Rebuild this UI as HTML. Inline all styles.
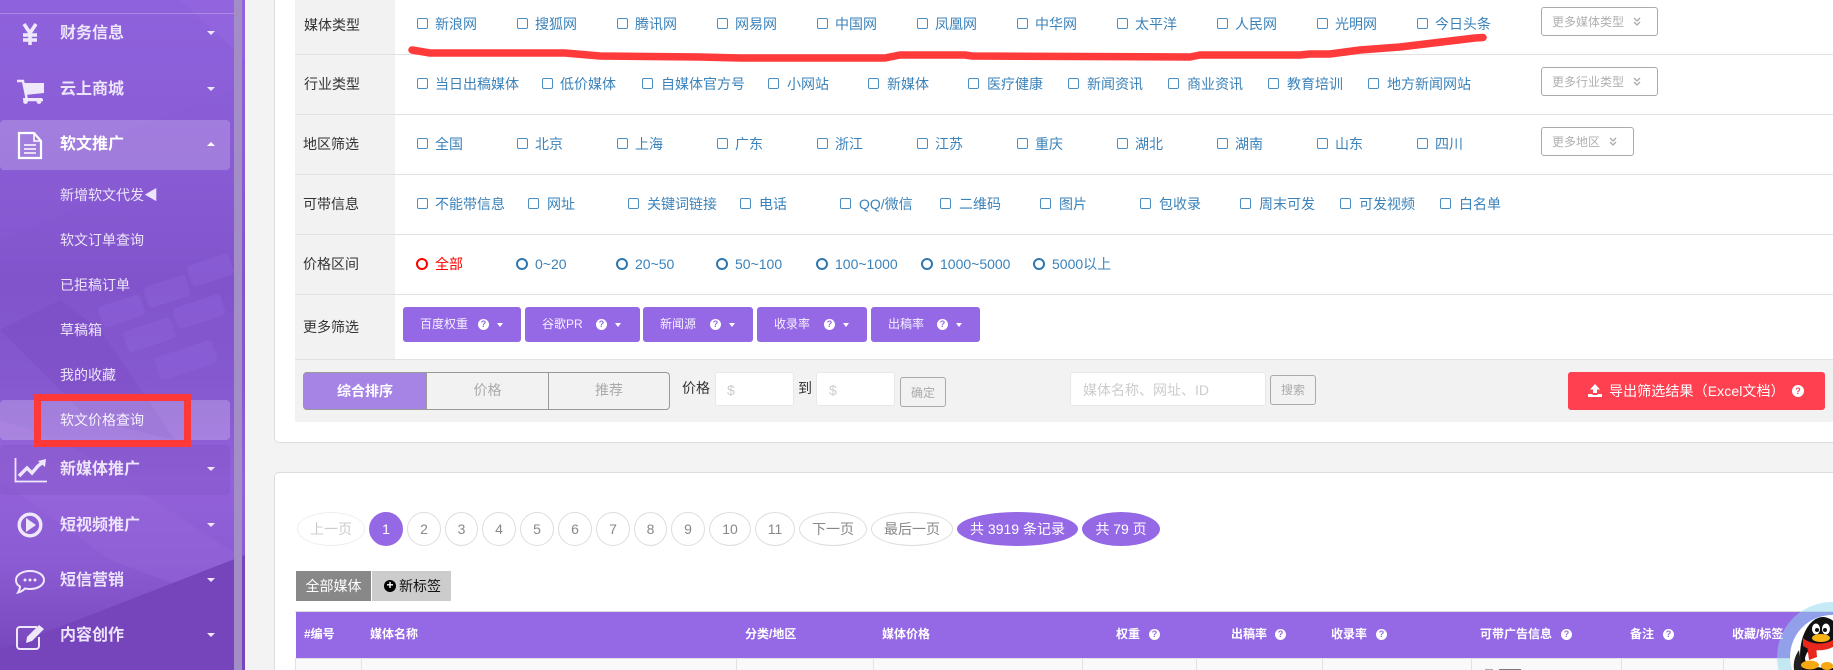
<!DOCTYPE html>
<html lang="zh-CN">
<head>
<meta charset="utf-8">
<title>软文价格查询</title>
<style>
html,body{margin:0;padding:0;width:1833px;height:670px;overflow:hidden}
body{position:relative;background:#f3f3f3;font-family:"Liberation Sans","Noto Sans CJK SC",sans-serif;font-size:14px;color:#333}
div,span,a,svg{position:absolute;box-sizing:border-box}
#w{left:0;top:0;width:1833px;height:670px;overflow:hidden;background:#f3f3f3}
.t{white-space:nowrap;line-height:20px;height:20px}
.c{width:11px;height:11px;border:1px solid #4a8fc4;border-radius:2px}
.r{width:12px;height:12px;border:2px solid #2f77b0;border-radius:50%}
.l{color:#3a82ba;white-space:nowrap;line-height:20px;height:20px}
.h{left:295px;width:1538px;height:1px;background:#e2e2e2}
.m{left:60px;color:#ece4fa;font-weight:700;font-size:16px;line-height:24px;height:24px;white-space:nowrap}
.s{left:60px;color:#ece4fa;font-size:14px;line-height:20px;height:20px;white-space:nowrap}
.ca{left:207px;width:0;height:0;border-left:4px solid transparent;border-right:4px solid transparent;border-top:4px solid #efe8fb}
.b{top:307px;height:35px;background:#9568e5;border-radius:3px}
.b .x{color:#f6f1ff;font-size:12px;line-height:20px;top:7px;white-space:nowrap}
.q{width:11px;height:11px;border-radius:50%;background:#fff;color:#9568e5;font-size:9px;font-weight:700;line-height:11px;text-align:center}
.dc{width:0;height:0;border-left:3.5px solid transparent;border-right:3.5px solid transparent;border-top:4px solid #fff}
.mo{height:29px;border:1px solid #aaa;border-radius:3px;background:#fff;left:1541px}
.mo .x{left:10px;top:4px;color:#b0b0b0;font-size:12px;line-height:20px;white-space:nowrap}
.p{top:512px;height:34px;border:1px solid #ddd;border-radius:50%;background:#fff;color:#888;text-align:center;line-height:32px;font-size:14px;white-space:nowrap}
.th{top:624px;color:#fff;font-weight:700;font-size:12px;line-height:20px;height:20px;white-space:nowrap}
.vl{top:659px;width:1px;height:11px;background:#e2e2e2}
.inp{background:#fff;border:1px solid #e8e8e8;border-radius:3px;height:34px;top:372px}
</style>
</head>
<body>
<div id="w">

<!-- sidebar -->
<svg style="left:0;top:0" width="245" height="670" viewBox="0 0 245 670">
  <defs>
    <linearGradient id="g" x1="0" y1="0" x2="0" y2="1">
      <stop offset="0" stop-color="#8e62dc"/>
      <stop offset=".22" stop-color="#8a5dd6"/>
      <stop offset=".42" stop-color="#8154cc"/>
      <stop offset=".56" stop-color="#8558cf"/>
      <stop offset=".72" stop-color="#9362da"/>
      <stop offset=".84" stop-color="#8a5bd2"/>
      <stop offset="1" stop-color="#7544b9"/>
    </linearGradient>
  </defs>
  <rect width="245" height="670" fill="url(#g)"/>
  <polygon points="180,0 245,0 245,60" fill="#9468e0" opacity=".6"/>
  <polygon points="0,180 245,85 245,140 0,240" fill="#8a5dd4" opacity=".4"/>
  <g fill="#9064dc" opacity=".4">
    <rect x="100" y="300" width="44" height="22" rx="4" transform="rotate(-18 122 312)"/>
    <rect x="145" y="282" width="44" height="22" rx="4" transform="rotate(-18 162 292)"/>
    <rect x="190" y="262" width="44" height="22" rx="4" transform="rotate(-18 202 277)"/>
    <rect x="125" y="325" width="50" height="22" rx="4" transform="rotate(-18 146 337)"/>
    <rect x="175" y="305" width="50" height="22" rx="4" transform="rotate(-18 186 317)"/>
    <rect x="155" y="350" width="60" height="24" rx="4" transform="rotate(-18 180 358)"/>
  </g>
  <polygon points="60,300 100,330 175,440 90,420 0,330" fill="#7a4bc2" opacity=".4"/>
  <polygon points="0,420 70,445 245,560 245,610 110,560 0,480" fill="#9a6ade" opacity=".35"/>
  <polygon points="0,650 245,555 245,670 0,670" fill="#7645bb"/>
  <rect y="13" width="234" height="1" fill="#fff" opacity=".25"/>
  <rect x="234" width="8" height="670" fill="#a38dc6"/>
</svg>
<div style="left:0;top:120px;width:230px;height:50px;background:rgba(255,255,255,.2);border-radius:4px"></div>
<div style="left:0;top:400px;width:230px;height:40px;background:rgba(255,255,255,.22);border-radius:4px"></div>
<div style="left:0;top:445px;width:230px;height:50px;background:rgba(90,50,160,.12);border-radius:4px"></div>

<svg style="left:0;top:0" width="60" height="670" viewBox="0 0 60 670" fill="none">
  <path d="M24 24l6 9 6-9M23 35h14M23 40h14M30 33v12" stroke="#efe8fb" stroke-width="3.6"/>
  <path d="M17 81h6l4 19h16" stroke="#efe8fb" stroke-width="2.4"/>
  <path d="M23 83h21v10l-19 2z" fill="#efe8fb"/>
  <rect x="23" y="98" width="19" height="2" fill="#efe8fb"/>
  <circle cx="25.500" cy="101.500" r="2.400" fill="#efe8fb"/><circle cx="39" cy="101.500" r="2.400" fill="#efe8fb"/>
  <path d="M19 133h15l7 8v17H19z" stroke="#fff" stroke-width="2.200"/>
  <path d="M34 133v8h7" stroke="#fff" stroke-width="1.600"/>
  <path d="M24 145h12M24 149h12M24 153h12" stroke="#fff" stroke-width="1.600"/>
  <path d="M15.500 458v23.500H47" stroke="#efe8fb" stroke-width="1.800"/>
  <path d="M19 476l8-8 5 5 6-7 5-4" stroke="#efe8fb" stroke-width="3.400"/>
  <path d="M38 461l8-2-1 8z" fill="#efe8fb"/>
  <circle cx="30" cy="525" r="10.800" stroke="#efe8fb" stroke-width="3.400"/>
  <path d="M26 518l10 7-10 7z" fill="#efe8fb"/>
  <path d="M30 571c8 0 14 4 14 9s-6 9-14 9c-2 0-3 0-5-.500-2 2-4 3.500-7 4 1-1.500 2-3.500 2-6-3-1.500-4-4-4-6.500 0-5 6-9 14-9z" stroke="#efe8fb" stroke-width="2"/>
  <circle cx="25" cy="580" r="1.500" fill="#efe8fb"/><circle cx="30" cy="580" r="1.500" fill="#efe8fb"/><circle cx="35" cy="580" r="1.500" fill="#efe8fb"/>
  <path d="M37 627H20a3 3 0 0 0-3 3v16a3 3 0 0 0 3 3h16a3 3 0 0 0 3-3v-9" stroke="#efe8fb" stroke-width="2"/>
  <path d="M26 643l1-6 12-12 5 4-12 12z" fill="#efe8fb"/>
</svg>

<div class="m" style="top:22px">财务信息</div><div class="ca" style="top:31px"></div>
<div class="m" style="top:78px">云上商城</div><div class="ca" style="top:87px"></div>
<div class="m" style="top:133px;color:#fff">软文推广</div><div class="ca" style="top:142px;border-top:0;border-bottom:4px solid #fff"></div>
<div class="s" style="top:185px">新增软文代发◀</div>
<div class="s" style="top:230px">软文订单查询</div>
<div class="s" style="top:275px">已拒稿订单</div>
<div class="s" style="top:320px">草稿箱</div>
<div class="s" style="top:365px">我的收藏</div>
<div class="s" style="top:410px;color:#f6f1ff">软文价格查询</div>
<div class="m" style="top:458px">新媒体推广</div><div class="ca" style="top:467px"></div>
<div class="m" style="top:514px">短视频推广</div><div class="ca" style="top:523px"></div>
<div class="m" style="top:569px">短信营销</div><div class="ca" style="top:578px"></div>
<div class="m" style="top:624px">内容创作</div><div class="ca" style="top:633px"></div>
<div style="left:34px;top:394px;width:157px;height:53px;border:7px solid #ff3838"></div>

<!-- top card -->
<div style="left:274px;top:0;width:1559px;height:443px;background:#fff;border:1px solid #ddd;border-top:0;border-right:0;border-radius:0 0 0 5px"></div>
<div style="left:295px;top:0;width:100px;height:359px;background:#f2f2f2"></div>
<div class="h" style="top:54px"></div>
<div class="h" style="top:114px"></div>
<div class="h" style="top:174px"></div>
<div class="h" style="top:234px"></div>
<div class="h" style="top:294px"></div>
<div class="h" style="top:359px"></div>

<div class="t" style="left:304px;top:15px">媒体类型</div>
<div class="t" style="left:304px;top:74px">行业类型</div>
<div class="t" style="left:303px;top:134px">地区筛选</div>
<div class="t" style="left:303px;top:194px">可带信息</div>
<div class="t" style="left:303px;top:254px">价格区间</div>
<div class="t" style="left:303px;top:317px">更多筛选</div>

<!-- row 1 -->
<div class="c" style="left:417px;top:18px"></div><div class="l" style="left:435px;top:14px">新浪网</div>
<div class="c" style="left:517px;top:18px"></div><div class="l" style="left:535px;top:14px">搜狐网</div>
<div class="c" style="left:617px;top:18px"></div><div class="l" style="left:635px;top:14px">腾讯网</div>
<div class="c" style="left:717px;top:18px"></div><div class="l" style="left:735px;top:14px">网易网</div>
<div class="c" style="left:817px;top:18px"></div><div class="l" style="left:835px;top:14px">中国网</div>
<div class="c" style="left:917px;top:18px"></div><div class="l" style="left:935px;top:14px">凤凰网</div>
<div class="c" style="left:1017px;top:18px"></div><div class="l" style="left:1035px;top:14px">中华网</div>
<div class="c" style="left:1117px;top:18px"></div><div class="l" style="left:1135px;top:14px">太平洋</div>
<div class="c" style="left:1217px;top:18px"></div><div class="l" style="left:1235px;top:14px">人民网</div>
<div class="c" style="left:1317px;top:18px"></div><div class="l" style="left:1335px;top:14px">光明网</div>
<div class="c" style="left:1417px;top:18px"></div><div class="l" style="left:1435px;top:14px">今日头条</div>
<div class="mo" style="top:7px;width:117px"><span class="x">更多媒体类型</span><svg style="left:91px;top:9px" width="8" height="9" viewBox="0 0 8 9" fill="none" stroke="#aaa" stroke-width="1.300"><path d="M1 1l3 3 3-3M1 5l3 3 3-3"/></svg></div>

<!-- row 2 -->
<div class="c" style="left:417px;top:78px"></div><div class="l" style="left:435px;top:74px">当日出稿媒体</div>
<div class="c" style="left:542px;top:78px"></div><div class="l" style="left:560px;top:74px">低价媒体</div>
<div class="c" style="left:642px;top:78px"></div><div class="l" style="left:661px;top:74px">自媒体官方号</div>
<div class="c" style="left:768px;top:78px"></div><div class="l" style="left:787px;top:74px">小网站</div>
<div class="c" style="left:868px;top:78px"></div><div class="l" style="left:887px;top:74px">新媒体</div>
<div class="c" style="left:968px;top:78px"></div><div class="l" style="left:987px;top:74px">医疗健康</div>
<div class="c" style="left:1068px;top:78px"></div><div class="l" style="left:1087px;top:74px">新闻资讯</div>
<div class="c" style="left:1168px;top:78px"></div><div class="l" style="left:1187px;top:74px">商业资讯</div>
<div class="c" style="left:1268px;top:78px"></div><div class="l" style="left:1287px;top:74px">教育培训</div>
<div class="c" style="left:1368px;top:78px"></div><div class="l" style="left:1387px;top:74px">地方新闻网站</div>
<div class="mo" style="top:67px;width:117px"><span class="x">更多行业类型</span><svg style="left:91px;top:9px" width="8" height="9" viewBox="0 0 8 9" fill="none" stroke="#aaa" stroke-width="1.300"><path d="M1 1l3 3 3-3M1 5l3 3 3-3"/></svg></div>

<!-- row 3 -->
<div class="c" style="left:417px;top:138px"></div><div class="l" style="left:435px;top:134px">全国</div>
<div class="c" style="left:517px;top:138px"></div><div class="l" style="left:535px;top:134px">北京</div>
<div class="c" style="left:617px;top:138px"></div><div class="l" style="left:635px;top:134px">上海</div>
<div class="c" style="left:717px;top:138px"></div><div class="l" style="left:735px;top:134px">广东</div>
<div class="c" style="left:817px;top:138px"></div><div class="l" style="left:835px;top:134px">浙江</div>
<div class="c" style="left:917px;top:138px"></div><div class="l" style="left:935px;top:134px">江苏</div>
<div class="c" style="left:1017px;top:138px"></div><div class="l" style="left:1035px;top:134px">重庆</div>
<div class="c" style="left:1117px;top:138px"></div><div class="l" style="left:1135px;top:134px">湖北</div>
<div class="c" style="left:1217px;top:138px"></div><div class="l" style="left:1235px;top:134px">湖南</div>
<div class="c" style="left:1317px;top:138px"></div><div class="l" style="left:1335px;top:134px">山东</div>
<div class="c" style="left:1417px;top:138px"></div><div class="l" style="left:1435px;top:134px">四川</div>
<div class="mo" style="top:127px;width:93px"><span class="x">更多地区</span><svg style="left:67px;top:9px" width="8" height="9" viewBox="0 0 8 9" fill="none" stroke="#aaa" stroke-width="1.300"><path d="M1 1l3 3 3-3M1 5l3 3 3-3"/></svg></div>

<!-- row 4 -->
<div class="c" style="left:417px;top:198px"></div><div class="l" style="left:435px;top:194px">不能带信息</div>
<div class="c" style="left:528px;top:198px"></div><div class="l" style="left:547px;top:194px">网址</div>
<div class="c" style="left:628px;top:198px"></div><div class="l" style="left:647px;top:194px">关键词链接</div>
<div class="c" style="left:740px;top:198px"></div><div class="l" style="left:759px;top:194px">电话</div>
<div class="c" style="left:840px;top:198px"></div><div class="l" style="left:859px;top:194px">QQ/微信</div>
<div class="c" style="left:940px;top:198px"></div><div class="l" style="left:959px;top:194px">二维码</div>
<div class="c" style="left:1040px;top:198px"></div><div class="l" style="left:1059px;top:194px">图片</div>
<div class="c" style="left:1140px;top:198px"></div><div class="l" style="left:1159px;top:194px">包收录</div>
<div class="c" style="left:1240px;top:198px"></div><div class="l" style="left:1259px;top:194px">周末可发</div>
<div class="c" style="left:1340px;top:198px"></div><div class="l" style="left:1359px;top:194px">可发视频</div>
<div class="c" style="left:1440px;top:198px"></div><div class="l" style="left:1459px;top:194px">白名单</div>

<!-- row 5 -->
<div class="r" style="left:416px;top:258px;border-color:#f00"></div><div class="l" style="left:435px;top:254px;color:#f00">全部</div>
<div class="r" style="left:516px;top:258px"></div><div class="l" style="left:535px;top:254px">0~20</div>
<div class="r" style="left:616px;top:258px"></div><div class="l" style="left:635px;top:254px">20~50</div>
<div class="r" style="left:716px;top:258px"></div><div class="l" style="left:735px;top:254px">50~100</div>
<div class="r" style="left:816px;top:258px"></div><div class="l" style="left:835px;top:254px">100~1000</div>
<div class="r" style="left:921px;top:258px"></div><div class="l" style="left:940px;top:254px">1000~5000</div>
<div class="r" style="left:1033px;top:258px"></div><div class="l" style="left:1052px;top:254px">5000以上</div>

<!-- dropdown buttons -->
<div class="b" style="left:403px;width:118px"><span class="x" style="left:17px">百度权重</span><span class="q" style="left:75px;top:12px">?</span><span class="dc" style="left:94px;top:16px"></span></div>
<div class="b" style="left:525px;width:115px"><span class="x" style="left:17px">谷歌PR</span><span class="q" style="left:71px;top:12px">?</span><span class="dc" style="left:90px;top:16px"></span></div>
<div class="b" style="left:643px;width:110px"><span class="x" style="left:17px">新闻源</span><span class="q" style="left:67px;top:12px">?</span><span class="dc" style="left:86px;top:16px"></span></div>
<div class="b" style="left:757px;width:110px"><span class="x" style="left:17px">收录率</span><span class="q" style="left:67px;top:12px">?</span><span class="dc" style="left:86px;top:16px"></span></div>
<div class="b" style="left:871px;width:109px"><span class="x" style="left:17px">出稿率</span><span class="q" style="left:66px;top:12px">?</span><span class="dc" style="left:85px;top:16px"></span></div>

<!-- gray toolbar -->
<div style="left:295px;top:360px;width:1538px;height:62px;background:#f2f2f2"></div>
<div style="left:303px;top:372px;width:367px;height:38px;border:1px solid #999;border-radius:4px;background:#f2f2f2"></div>
<div style="left:303px;top:372px;width:124px;height:38px;background:#a684e6;border:1px solid #999;border-radius:4px 0 0 4px;color:#fff;text-align:center;line-height:36px;font-weight:700">综合排序</div>
<div style="left:426px;top:372px;width:123px;height:38px;border-right:1px solid #999;border-left:1px solid #999;color:#aaa;text-align:center;line-height:37px">价格</div>
<div style="left:548px;top:372px;width:122px;height:38px;color:#aaa;text-align:center;line-height:37px">推荐</div>
<div class="t" style="left:682px;top:378px">价格</div>
<div class="inp" style="left:715px;width:79px"></div><div class="t" style="left:727px;top:380px;color:#ccc">$</div>
<div class="t" style="left:798px;top:378px">到</div>
<div class="inp" style="left:816px;width:79px"></div><div class="t" style="left:829px;top:380px;color:#ccc">$</div>
<div style="left:900px;top:377px;width:46px;height:30px;border:1px solid #aaa;border-radius:3px;color:#aaa;text-align:center;font-size:12px;line-height:30px">确定</div>
<div class="inp" style="left:1070px;width:196px"></div><div class="t" style="left:1083px;top:380px;color:#ccc">媒体名称、网址、ID</div>
<div style="left:1270px;top:375px;width:46px;height:30px;border:1px solid #aaa;border-radius:3px;color:#aaa;text-align:center;font-size:12px;line-height:28px">搜索</div>
<div style="left:1568px;top:372px;width:257px;height:38px;background:#ff4050;border-radius:3px"></div>
<svg style="left:1587px;top:383px" width="16" height="15" viewBox="0 0 16 15"><path d="M8 1l5 5.500h-3V10H6V6.500H3z M1 11h4.500v1h5v-1H15v3H1z" fill="#fff"/></svg>
<div class="t" style="left:1609px;top:381px;color:#fff;letter-spacing:.1px">导出筛选结果（Excel文档）</div>
<div class="q" style="left:1792px;top:385px;width:12px;height:12px;color:#ff4050;line-height:12px">?</div>

<!-- red scribble -->
<svg style="left:0;top:0" width="1833" height="670" viewBox="0 0 1833 670" fill="none"><path d="M412 50L430 53 565 53 600 56 700 57 740 58 885 58 900 55 965 55 972 56 1190 57 1200 55 1300 55 1310 54 1330 54 1360 50 1400 47 1450 41 1475 38 1483 37.500" stroke="#ff3a3a" stroke-width="7.500" stroke-linecap="round" stroke-linejoin="round"/></svg>

<!-- bottom card -->
<div style="left:274px;top:472px;width:1559px;height:198px;background:#fff;border:1px solid #ddd;border-bottom:0;border-right:0;border-radius:5px 0 0 0"></div>
<div class="p" style="left:297px;width:68px;border-color:#eee;color:#ccc">上一页</div>
<div class="p" style="left:369px;width:34px;background:#9568e5;border-color:#9568e5;color:#fff">1</div>
<div class="p" style="left:407px;width:34px">2</div>
<div class="p" style="left:445px;width:33px">3</div>
<div class="p" style="left:482px;width:34px">4</div>
<div class="p" style="left:520px;width:34px">5</div>
<div class="p" style="left:558px;width:34px">6</div>
<div class="p" style="left:596px;width:34px">7</div>
<div class="p" style="left:634px;width:33px">8</div>
<div class="p" style="left:671px;width:34px">9</div>
<div class="p" style="left:709px;width:42px">10</div>
<div class="p" style="left:755px;width:40px">11</div>
<div class="p" style="left:799px;width:68px">下一页</div>
<div class="p" style="left:871px;width:82px">最后一页</div>
<div class="p" style="left:957px;width:121px;background:#9568e5;border-color:#9568e5;color:#fff">共 3919 条记录</div>
<div class="p" style="left:1082px;width:78px;background:#9568e5;border-color:#9568e5;color:#fff">共 79 页</div>

<div style="left:296px;top:571px;width:75px;height:30px;background:#888;color:#fff;text-align:center;line-height:30px">全部媒体</div>
<div style="left:372px;top:571px;width:79px;height:30px;background:#ccc;color:#111"><span style="left:12px;top:9px;width:12px;height:12px;border-radius:50%;background:#000;color:#fff;font-size:12px;line-height:11px;text-align:center;font-weight:700">+</span><span style="left:27px;top:0;line-height:30px;white-space:nowrap">新标签</span></div>

<div style="left:295px;top:611px;width:1538px;height:1px;background:#ddd"></div>
<div style="left:296px;top:612px;width:1537px;height:46px;background:#9568e5"></div>
<div style="left:295px;top:658px;width:1538px;height:1px;background:#e2e2e2"></div>
<div style="left:295px;top:659px;width:1538px;height:11px;background:#f9f9f9"></div>
<div class="vl" style="left:295px"></div><div class="vl" style="left:361px"></div><div class="vl" style="left:736px"></div><div class="vl" style="left:873px"></div><div class="vl" style="left:1082px"></div><div class="vl" style="left:1196px"></div><div class="vl" style="left:1322px"></div><div class="vl" style="left:1471px"></div><div class="vl" style="left:1621px"></div><div class="vl" style="left:1723px"></div>

<div class="th" style="left:304px">#编号</div>
<div class="th" style="left:370px">媒体名称</div>
<div class="th" style="left:745px">分类/地区</div>
<div class="th" style="left:882px">媒体价格</div>
<div class="th" style="left:1116px">权重</div><div class="q" style="left:1149px;top:629px">?</div>
<div class="th" style="left:1231px">出稿率</div><div class="q" style="left:1275px;top:629px">?</div>
<div class="th" style="left:1331px">收录率</div><div class="q" style="left:1376px;top:629px">?</div>
<div class="th" style="left:1480px">可带广告信息</div><div class="q" style="left:1561px;top:629px">?</div>
<div class="th" style="left:1630px">备注</div><div class="q" style="left:1663px;top:629px">?</div>
<div class="th" style="left:1732px">收藏/标签</div>

<div style="left:1485px;top:669px;width:8px;height:1px;background:#aaa"></div>
<div style="left:1499px;top:669px;width:22px;height:1px;background:#777"></div>

<!-- QQ float: shapes trimmed to the frame edge -->
<svg style="left:1770px;top:595px" width="63" height="75" viewBox="1770 595 63 75">
  <path d="M1833 602A55 55 0 0 0 1778.600 670H1833Z" fill="#8fd8ee" opacity=".5"/>
  <path d="M1833 615A42 42 0 0 0 1792.100 670H1833Z" fill="#fff"/>
  <path d="M1833 620.800A23 38 0 0 0 1801.900 670H1833Z" fill="#111"/>
  <path d="M1799 650c-4 6-6 12-5 20h8z" fill="#222"/>
  <path d="M1833 644.500C1822 642 1808 645 1805 658C1805 666 1815 668 1833 668Z" fill="#fff"/>
  <ellipse cx="1816" cy="629" rx="4" ry="5.500" fill="#fff"/>
  <ellipse cx="1826" cy="629" rx="4" ry="5.500" fill="#fff"/>
  <circle cx="1817" cy="630" r="2" fill="#111"/><circle cx="1825" cy="630" r="2" fill="#111"/>
  <ellipse cx="1821" cy="638" rx="9" ry="4" fill="#f5b314"/>
  <path d="M1803 638c8 7 22 7 30 2v7c-10 5-22 4-30-1z" fill="#e8281c"/>
  <path d="M1807 645h9l1 12-8 3z" fill="#e8281c"/>
  <ellipse cx="1810" cy="665" rx="9" ry="4.500" fill="#f6a912"/>
  <ellipse cx="1827" cy="666" rx="6" ry="4" fill="#f6a912"/>
</svg>

</div>
</body>
</html>
